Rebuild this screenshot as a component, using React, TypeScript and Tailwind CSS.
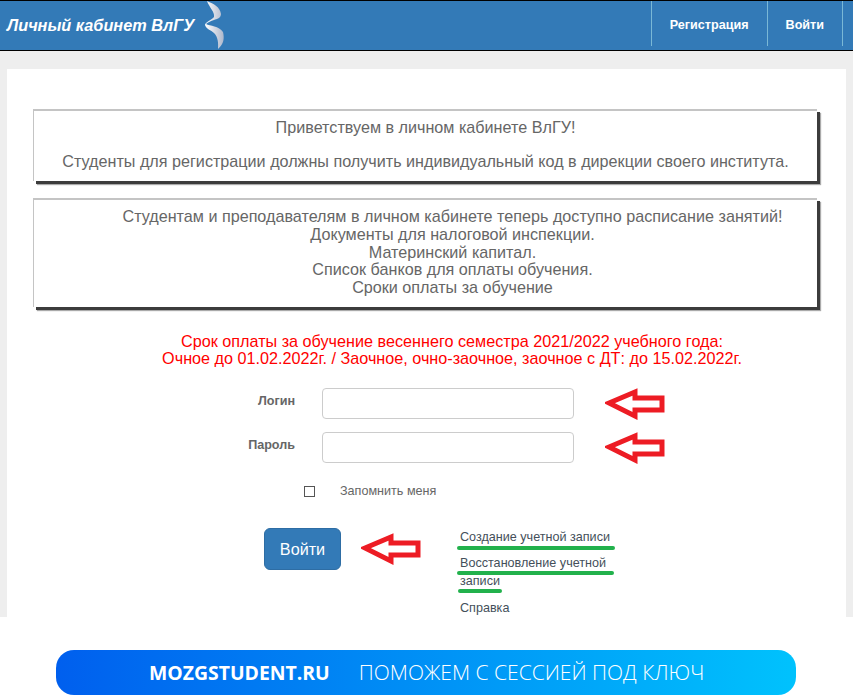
const font = "font-['Liberation_Sans',Arial,sans-serif]";

function Arrow({ className }: { className?: string }) {
  return (
    <svg viewBox="0 0 60 32" className={`block h-[32px] w-[60px] ${className ?? ""}`} fill="none">
      <path d="M4 15 L30 4 L30 10 L57 10 L57 22 L30 22 L30 28 Z" stroke="#ed1c24" strokeWidth="5" strokeLinejoin="miter" />
    </svg>
  );
}

function Logo() {
  return (
    <svg viewBox="0 0 20 48" className="block h-[48px] w-[20px]">
      <defs>
        <linearGradient id="swoosh" x1="0" y1="0" x2="1" y2="0">
          <stop offset="0" stopColor="#ffffff" />
          <stop offset="1" stopColor="#aeb8cc" />
        </linearGradient>
      </defs>
      <path
        d="M2 0 C9 3 15 6 16 13 C16 17 12 18 9 19 C6 20 3 21 1 23 C5 25 14 25 18 31 C19.5 37 19 43 13 48 C13.5 42 13 36 9 32 C6 29 1 28 0 24 C0 21 7 19 9 16 C10 11 4 6 2 0 Z"
        fill="url(#swoosh)"
      />
    </svg>
  );
}

function Underline({ className }: { className: string }) {
  return <span className={`absolute h-[4px] rounded-full bg-[#22b14c] ${className}`} />;
}

export default function App() {
  return (
    <div className={`h-[700px] w-[853px] overflow-hidden bg-[#eeeeee] ${font}`}>
      <nav className="flex h-[51px] items-start justify-between border-y border-black bg-[#337ab7]">
        <div className="flex items-start">
          <a className="mt-[15px] ml-[7px] w-[198px] text-[16.3px] leading-[19px] font-bold text-white italic">Личный кабинет ВлГУ</a>
          <Logo />
        </div>
        <ul className="mr-[10px] flex h-[45px] border-r border-[#7ab8d6] text-[12.6px] font-bold text-white">
          <li className="border-l border-[#7ab8d6] px-[18px] pt-[15px]">Регистрация</li>
          <li className="border-l border-[#7ab8d6] px-[18px] pt-[15px]">Войти</li>
        </ul>
      </nav>

      <main className="mx-[7px] mt-[18px] h-[548px] bg-white px-[26px] pt-[40px]">
        <div className="mr-[3px] flex h-[72px] flex-col items-center border-t-2 border-l border-[#c4c4c4] pt-[5px] text-[16.16px] leading-[23px] text-[#666666] shadow-[3px_3px_0_#3c3c3c,4px_4px_1px_#aaaaaa]">
          <p>Приветствуем в личном кабинете ВлГУ!</p>
          <p className="mt-[11px]">Студенты для регистрации должны получить индивидуальный код в дирекции своего института.</p>
        </div>

        <div className="mt-[17px] mr-[3px] flex h-[109px] flex-col items-center border-t-2 border-l border-[#c4c4c4] pt-[8px] pl-[54px] text-[16.16px] leading-[17.8px] text-[#666666] shadow-[3px_3px_0_#3c3c3c,4px_4px_1px_#aaaaaa]">
          <p>Студентам и преподавателям в личном кабинете теперь доступно расписание занятий!</p>
          <p>Документы для налоговой инспекции.</p>
          <p>Материнский капитал.</p>
          <p>Список банков для оплаты обучения.</p>
          <p>Сроки оплаты за обучение</p>
        </div>

        <div className="mt-[26px] pl-[51px] text-center text-[16.2px] leading-[17px] text-[#ff0000]">
          <p>Срок оплаты за обучение весеннего семестра 2021/2022 учебного года:</p>
          <p>Очное до 01.02.2022г. / Заочное, очно-заочное, заочное с ДТ: до 15.02.2022г.</p>
        </div>

        <form className="mt-[21px]">
          <div className="flex h-[31px] items-center">
            <label className="w-[262px] pb-[5px] text-right text-[12.6px] font-bold text-[#666666]">Логин</label>
            <input className="ml-[27px] h-[31px] w-[252px] rounded-[4px] border border-[#cccccc] bg-white" />
            <Arrow className="ml-[31px]" />
          </div>
          <div className="mt-[13px] flex h-[31px] items-center">
            <label className="w-[262px] pb-[5px] text-right text-[12.6px] font-bold text-[#666666]">Пароль</label>
            <input className="ml-[27px] h-[31px] w-[252px] rounded-[4px] border border-[#cccccc] bg-white" />
            <Arrow className="ml-[31px]" />
          </div>
          <div className="mt-[21px] flex h-[14px] items-center">
            <span className="ml-[271px] h-[11px] w-[11px] border border-[#555555] bg-white" />
            <span className="ml-[25px] text-[12.6px] text-[#666666]">Запомнить меня</span>
          </div>
          <div className="mt-[30px] flex items-start">
            <button type="button" className="ml-[231px] h-[42px] w-[77px] rounded-[6px] border border-[#2e6da4] bg-[#337ab7] text-[16.2px] text-white">Войти</button>
            <Arrow className="mt-[5px] ml-[20px]" />
            <ul className="relative mt-[-1px] ml-[39px] w-[160px] text-[12.6px] leading-[18px] text-[#444f5a]">
              <li className="mt-[1px]">Создание учетной записи</li>
              <li className="mt-[8px]">Восстановление учетной</li>
              <li>записи</li>
              <li className="mt-[9px]">Справка</li>
              <Underline className="top-[19px] left-[-3px] w-[158px]" />
              <Underline className="top-[44px] left-[-3px] w-[157px]" />
              <Underline className="top-[62px] left-[-2px] w-[44px]" />
            </ul>
          </div>
        </form>
      </main>

      <div className="flex h-[83px] items-start bg-white px-[56px] pt-[33px]">
        <div className="flex h-[45px] w-[740px] items-center rounded-[18px] bg-[linear-gradient(90deg,#005fee,#00c2fd)] pl-[93px] font-['Open_Sans',sans-serif] text-white">
          <span className="text-[19.4px] font-bold">MOZGSTUDENT.RU</span>
          <span className="ml-[29px] text-[21px] font-light">ПОМОЖЕМ С СЕССИЕЙ ПОД КЛЮЧ</span>
        </div>
      </div>
    </div>
  );
}
